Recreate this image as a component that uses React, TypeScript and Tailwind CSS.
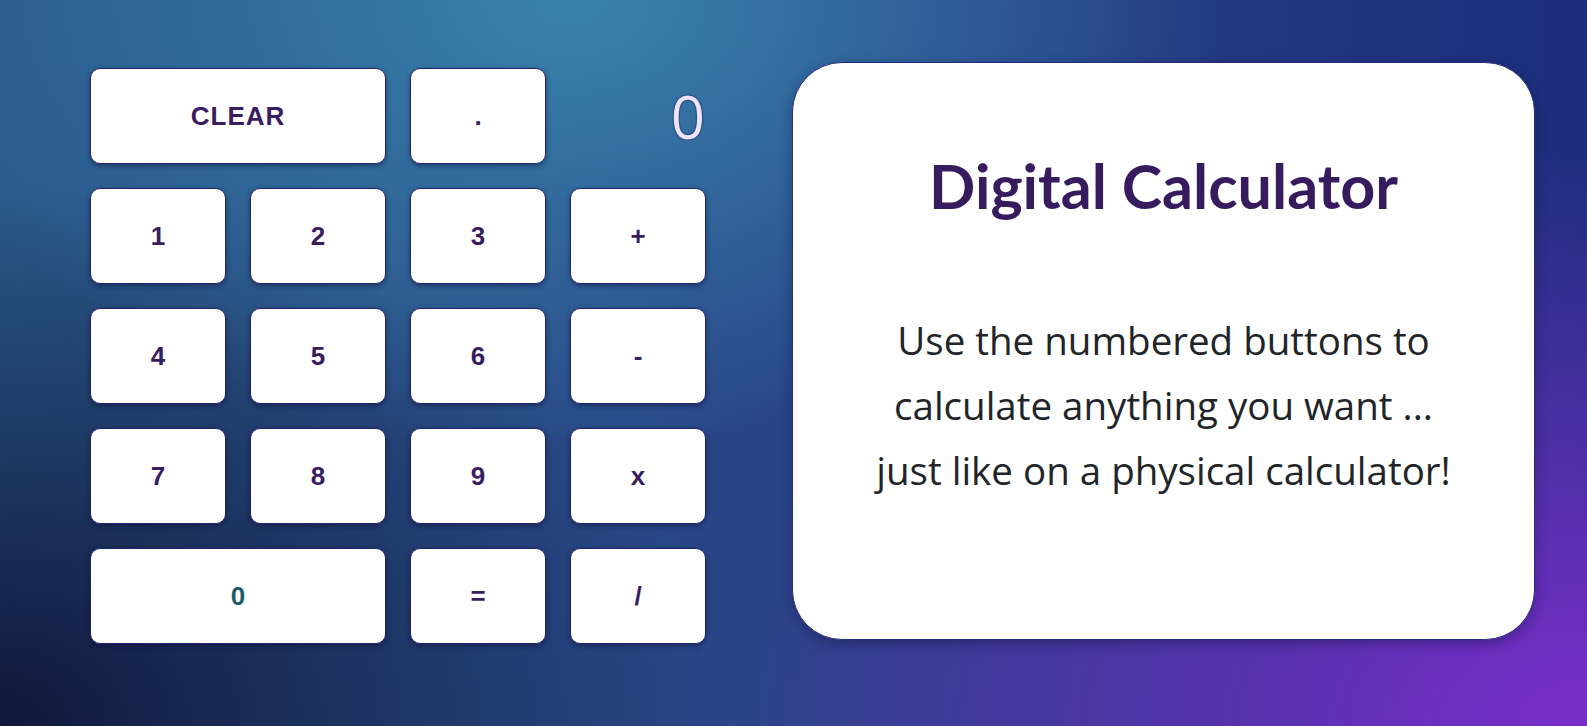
const keys: { label: string; span?: boolean; teal?: boolean }[] = [
  { label: "1" },
  { label: "2" },
  { label: "3" },
  { label: "+" },
  { label: "4" },
  { label: "5" },
  { label: "6" },
  { label: "-" },
  { label: "7" },
  { label: "8" },
  { label: "9" },
  { label: "x" },
  { label: "0", span: true, teal: true },
  { label: "=" },
  { label: "/" },
];

function Key({ label, span, teal }: { label: string; span?: boolean; teal?: boolean }) {
  return (
    <button
      className={
        "h-[96px] rounded-[10px] bg-white border border-[#22236e] shadow-[0_2px_5px_rgba(10,12,50,0.45)] flex items-center justify-center font-['Liberation_Sans',Arial,sans-serif] font-bold text-[26px] " +
        (span ? "col-span-2 " : "") +
        (teal ? "text-[#1f5a6b]" : "text-[#381d60]")
      }
    >
      {label}
    </button>
  );
}

export default function App() {
  return (
    <div className="min-h-screen w-full flex items-start gap-[86px] pl-[90px] pt-[62px] bg-[radial-gradient(ellipse_42%_62%_at_36%_0%,#3883ad_0%,rgba(56,131,173,0)_100%),radial-gradient(ellipse_55%_80%_at_100%_100%,#7a2ecb_0%,rgba(122,46,203,0)_100%),radial-gradient(ellipse_45%_75%_at_0%_100%,#10163a_0%,rgba(16,22,58,0)_100%),linear-gradient(90deg,#2a5a8a_0%,#283f86_60%,#1c2e7c_100%)]">
      {/* keypad */}
      <div className="mt-[6px] grid grid-cols-[repeat(4,136px)] gap-[24px]">
        <button className="col-span-2 h-[96px] rounded-[10px] bg-white border border-[#22236e] shadow-[0_2px_5px_rgba(10,12,50,0.45)] flex items-center justify-center font-['Liberation_Sans',Arial,sans-serif] font-bold text-[26px] tracking-[1px] text-[#381d60]">
          CLEAR
        </button>
        <Key label="." />
        <div className="h-[96px] flex items-center justify-end pr-[1px] font-['Open_Sans',sans-serif] font-normal text-[60px] text-[#ece4ff] [text-shadow:0_0_1px_#121a5c,0_0_2px_#121a5c]">
          0
        </div>
        {keys.map((k) => (
          <Key key={k.label} {...k} />
        ))}
      </div>

      {/* info card */}
      <div className="w-[743px] h-[578px] rounded-[50px] bg-white border border-[#2a2a7a] shadow-[0_4px_12px_rgba(10,12,50,0.35)] flex flex-col items-center pt-[92px] text-center">
        <h1 className="font-['Lato',sans-serif] text-[61px] leading-none font-bold text-[#371b5f]">Digital Calculator</h1>
        <p className="mt-[92px] font-['Open_Sans',sans-serif] text-[38.5px] leading-[65px] text-[#212529]">
          Use the numbered buttons to
          <br />
          calculate anything you want ...
          <br />
          just like on a physical calculator!
        </p>
      </div>
    </div>
  );
}
